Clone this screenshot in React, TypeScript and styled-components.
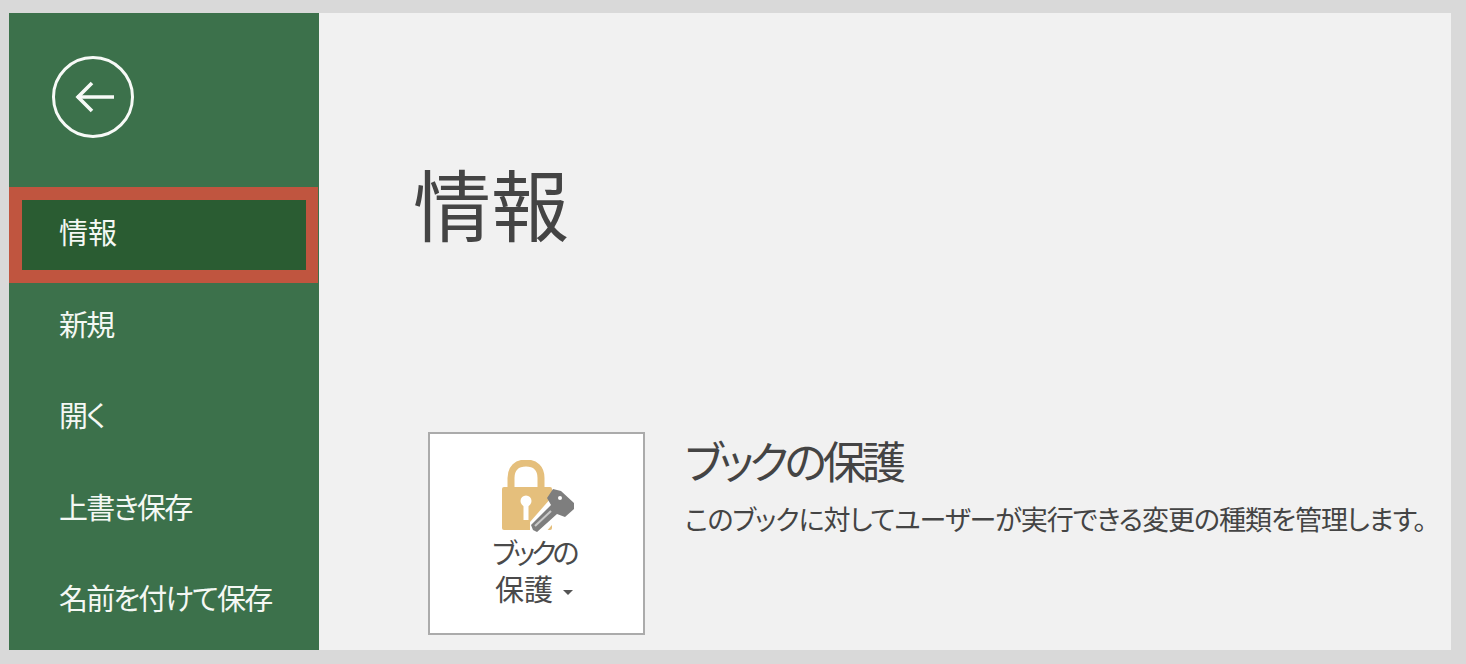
import styled, { createGlobalStyle } from "styled-components";

const GlobalStyle = createGlobalStyle`
  html, body {
    margin: 0;
    padding: 0;
    background: #d9d9d9;
  }

  body {
    font-family: "Liberation Sans", "Noto Sans CJK JP", sans-serif;
    font-feature-settings: "palt";
  }
`;

const Frame = styled.div`
  box-sizing: border-box;
  width: 1466px;
  height: 664px;
  padding: 13px 15px 14px 9px;
  overflow: hidden;
`;

const Win = styled.div`
  display: flex;
  height: 100%;
  background: #f1f1f1;
`;

const Sidebar = styled.nav`
  display: flex;
  flex-direction: column;
  flex: 0 0 310px;
  background: #3c714b;
  color: #f4f8f4;
`;

const BackButton = styled.div`
  height: 174px;
  padding: 42px 0 0 42px;
  box-sizing: border-box;

  svg {
    display: block;
  }
`;

const NavItem = styled.div<{ $active?: boolean }>`
  box-sizing: border-box;
  display: flex;
  align-items: center;
  height: ${(p) => (p.$active ? "96px" : "91.5px")};
  padding-left: ${(p) => (p.$active ? "37px" : "50px")};
  padding-bottom: ${(p) => (p.$active ? "8px" : "12px")};
  font-size: 29px;
  letter-spacing: ${(p) => (p.$active ? "0" : "-1.8px")};
  white-space: nowrap;
  background: ${(p) => (p.$active ? "#2a5c32" : "transparent")};
  border: ${(p) => (p.$active ? "13px solid #c0553f" : "none")};
  border-right-width: ${(p) => (p.$active ? "12px" : "0")};
  margin-right: ${(p) => (p.$active ? "1px" : "0")};
`;

const Main = styled.main`
  flex: 1;
  padding: 152px 0 0 94px;
  color: #444;
`;

const Title = styled.h1`
  margin: 0 0 179px;
  height: 88px;
  font-size: 78px;
  line-height: 88px;
  font-weight: 400;
`;

const Section = styled.section`
  display: flex;
  align-items: flex-start;
  gap: 40px;
  margin: 0 0 0 15px;
`;

const ProtectCard = styled.div`
  box-sizing: border-box;
  display: flex;
  flex-direction: column;
  align-items: center;
  flex: 0 0 217px;
  height: 203px;
  padding: 26px 0 0 4px;
  background: #fff;
  border: 2px solid #ababab;
  color: #4a4a4a;
  font-size: 29px;
  line-height: 37px;
  text-align: center;

  svg {
    display: block;
  }
`;

const CardLabel = styled.div`
  margin: 0 0 0 -9px;
`;

const KanaLine = styled.div`
  font-size: 28px;
  letter-spacing: -3.8px;
`;

const Caret = styled.span`
  display: inline-block;
  width: 0;
  height: 0;
  margin-left: 10px;
  vertical-align: 6px;
  border-left: 5px solid transparent;
  border-right: 5px solid transparent;
  border-top: 5px solid #555;
`;

const SectionText = styled.div`
  padding-top: 7px;
`;

const SectionTitle = styled.h2`
  margin: 0;
  font-size: 44px;
  line-height: 50px;
  font-weight: 400;
  letter-spacing: -4.4px;
  white-space: nowrap;
`;

const SectionDesc = styled.p`
  margin: 14px 0 0;
  font-size: 27px;
  line-height: 36px;
  letter-spacing: -1px;
  white-space: nowrap;
`;

function BackIcon() {
  return (
    <svg width="84" height="84" viewBox="0 0 84 84" fill="none" stroke="#f7faf7">
      <circle cx="42" cy="42" r="39.5" strokeWidth="3" />
      <path d="M26 42 H63" strokeWidth="3.6" />
      <path d="M41 28 L27 42 L41 56" strokeWidth="3.6" />
    </svg>
  );
}

function LockKeyIcon() {
  return (
    <svg width="76" height="76" viewBox="0 0 76 76">
      <path
        d="M10 28 V18 C10 8 16 3 25 3 C34 3 40 8 40 18 V28"
        fill="none"
        stroke="#e5bf7c"
        strokeWidth="7"
      />
      <rect x="1" y="27" width="50" height="43" rx="2" fill="#e5bf7c" />
      <circle cx="25" cy="41" r="5.5" fill="#fff" />
      <rect x="22.5" y="42" width="5" height="18" fill="#fff" />
      <path d="M44 73 L29 73 L29 62 L50 38 L64 50 Z" fill="#fff" />
      <path
        d="M32 70 L30 65 L50 45 L46 38 L52 29 L60 31 L73 43 L73 49 L64 57 L56 54 L36 72 Z"
        fill="#7e7e7e"
      />
      <path d="M34 66 L50 51" stroke="#c9c9c9" strokeWidth="2" />
      <circle cx="59" cy="38" r="2" fill="#fff" />
    </svg>
  );
}

const navItems = ["新規", "開く", "上書き保存", "名前を付けて保存"];

export default function App() {
  return (
    <>
      <GlobalStyle />
      <Frame>
        <Win>
          <Sidebar>
            <BackButton>
              <BackIcon />
            </BackButton>
            <NavItem $active>情報</NavItem>
            {navItems.map((item) => (
              <NavItem key={item}>{item}</NavItem>
            ))}
          </Sidebar>
          <Main>
            <Title>情報</Title>
            <Section>
              <ProtectCard>
                <LockKeyIcon />
                <CardLabel>
                  <KanaLine>ブックの</KanaLine>
                  保護
                  <Caret />
                </CardLabel>
              </ProtectCard>
              <SectionText>
                <SectionTitle>ブックの保護</SectionTitle>
                <SectionDesc>
                  このブックに対してユーザーが実行できる変更の種類を管理します。
                </SectionDesc>
              </SectionText>
            </Section>
          </Main>
        </Win>
      </Frame>
    </>
  );
}
